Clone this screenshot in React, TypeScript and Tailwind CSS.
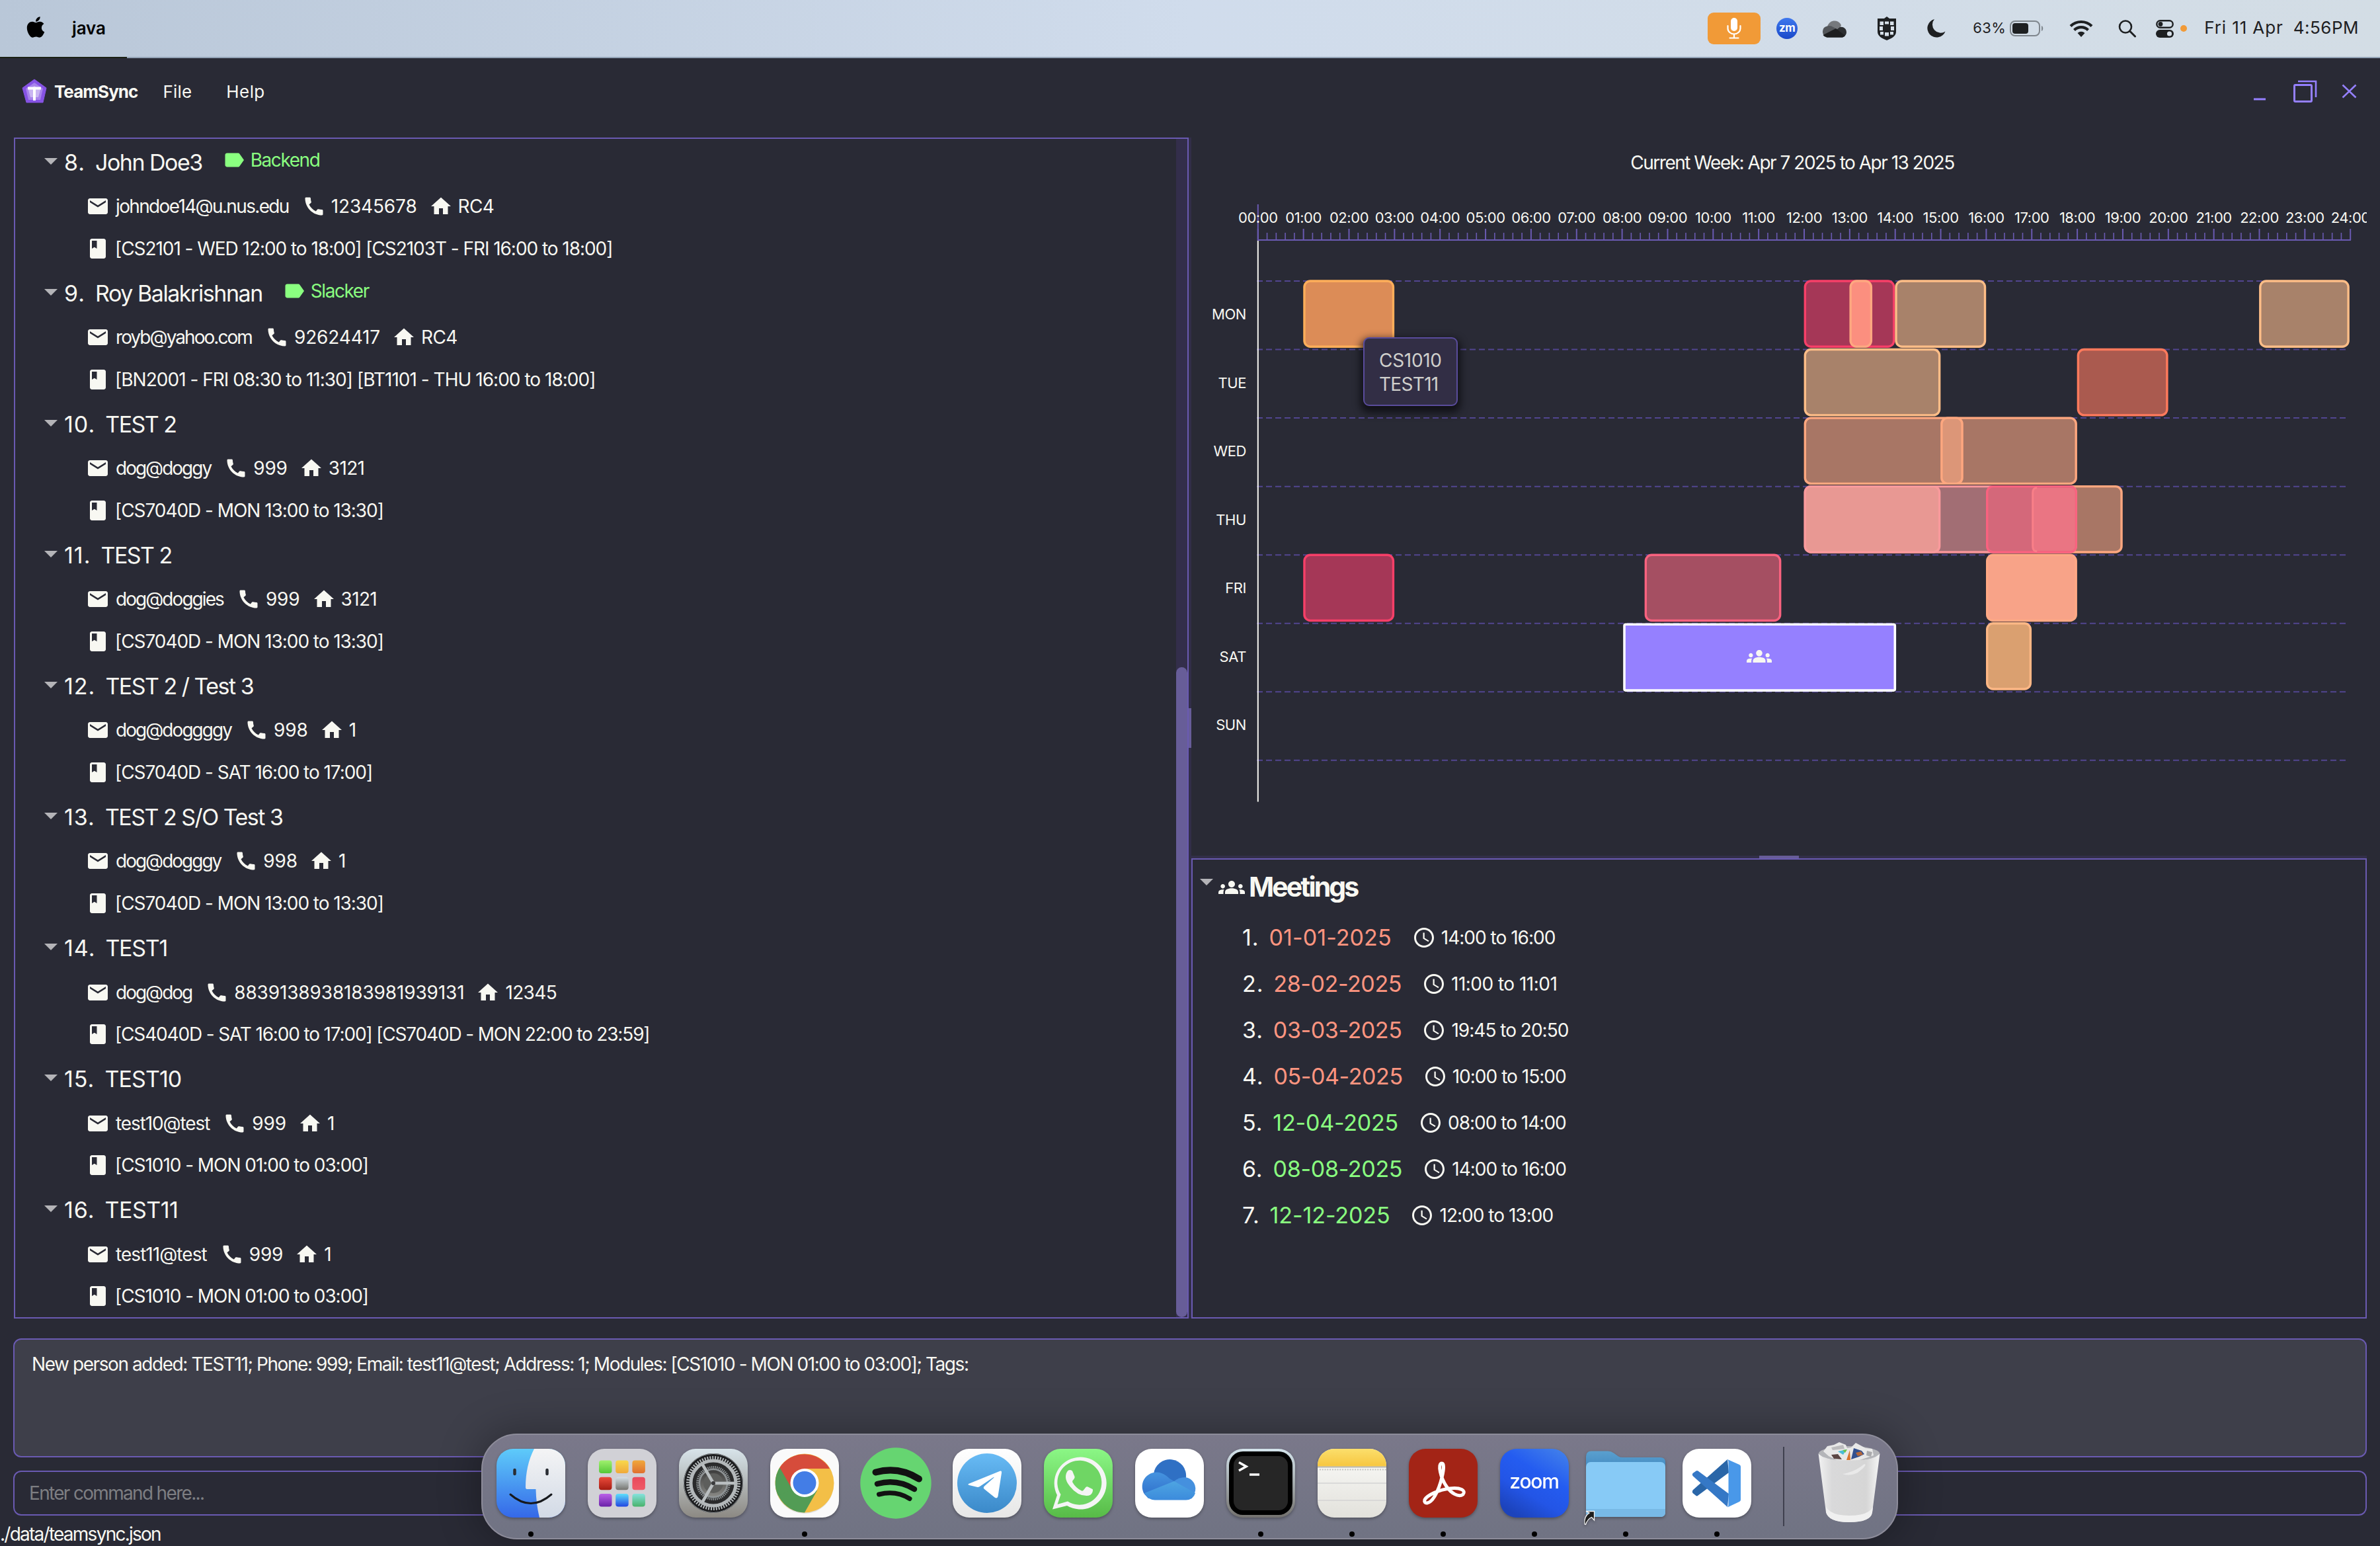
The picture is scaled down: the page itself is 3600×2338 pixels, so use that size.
import React from "react";
import { MdBook, MdCall, MdEmail, MdGroups, MdHome, MdLabel, MdAccessTime } from "react-icons/md";
import { FaApple } from "react-icons/fa";

type Person = {
  index: number;
  name: string;
  nameClass?: string;
  tag?: string;
  email: string;
  emailClass: string;
  phone: string;
  address: string;
  modules: string;
  modulesClass?: string;
};

const people: Person[] = [
  { index: 8, name: "John Doe3", tag: "Backend", email: "johndoe14@u.nus.edu", emailClass: "tracking-[-1.650px]", phone: "12345678", address: "RC4", modules: "[CS2101 - WED 12:00 to 18:00] [CS2103T - FRI 16:00 to 18:00]" },
  { index: 9, name: "Roy Balakrishnan", nameClass: "tracking-[-1.450px]", tag: "Slacker", email: "royb@yahoo.com", emailClass: "tracking-[-1.950px]", phone: "92624417", address: "RC4", modules: "[BN2001 - FRI 08:30 to 11:30] [BT1101 - THU 16:00 to 18:00]", modulesClass: "tracking-[-0.980px]" },
  { index: 10, name: "TEST 2", email: "dog@doggy", emailClass: "tracking-[-2px]", phone: "999", address: "3121", modules: "[CS7040D - MON 13:00 to 13:30]" },
  { index: 11, name: "TEST 2", email: "dog@doggies", emailClass: "tracking-[-1.950px]", phone: "999", address: "3121", modules: "[CS7040D - MON 13:00 to 13:30]" },
  { index: 12, name: "TEST 2 / Test 3", email: "dog@doggggy", emailClass: "tracking-[-1.950px]", phone: "998", address: "1", modules: "[CS7040D - SAT 16:00 to 17:00]" },
  { index: 13, name: "TEST 2 S/O Test 3", email: "dog@dogggy", emailClass: "tracking-[-2px]", phone: "998", address: "1", modules: "[CS7040D - MON 13:00 to 13:30]" },
  { index: 14, name: "TEST1", nameClass: "tracking-[-1.300px]", email: "dog@dog", emailClass: "tracking-[-2px]", phone: "8839138938183981939131", address: "12345", modules: "[CS4040D - SAT 16:00 to 17:00] [CS7040D - MON 22:00 to 23:59]", modulesClass: "tracking-[-1.160px]" },
  { index: 15, name: "TEST10", nameClass: "tracking-[-0.900px]", email: "test10@test", emailClass: "tracking-[-1.100px]", phone: "999", address: "1", modules: "[CS1010 - MON 01:00 to 03:00]" },
  { index: 16, name: "TEST11", nameClass: "tracking-[-0.500px]", email: "test11@test", emailClass: "tracking-[-0.950px]", phone: "999", address: "1", modules: "[CS1010 - MON 01:00 to 03:00]" },
];

const meetings = [
  { date: "01-01-2025", time: "14:00 to 16:00", past: true, dateClass: "tracking-[0.100px]", timeClass: "tracking-[-0.980px]" },
  { date: "28-02-2025", time: "11:00 to 11:01", past: true, dateClass: "tracking-[-0.400px]", timeClass: "tracking-[-0.520px]" },
  { date: "03-03-2025", time: "19:45 to 20:50", past: true, dateClass: "tracking-[-0.400px]", timeClass: "tracking-[-1px]" },
  { date: "05-04-2025", time: "10:00 to 15:00", past: true, dateClass: "tracking-[-0.400px]", timeClass: "tracking-[-0.980px]" },
  { date: "12-04-2025", time: "08:00 to 14:00", past: false, dateClass: "tracking-[-0.200px]", timeClass: "tracking-[-1px]" },
  { date: "08-08-2025", time: "14:00 to 16:00", past: false, dateClass: "tracking-[-0.300px]", timeClass: "tracking-[-0.980px]" },
  { date: "12-12-2025", time: "12:00 to 13:00", past: false, dateClass: "tracking-[-0.100px]", timeClass: "tracking-[-0.980px]" },
];

/* ---------- macOS menu bar ---------- */

function MenuBar() {
  return (
    <header className="flex h-[86px] w-full shrink-0 items-center bg-linear-to-r from-[#b9c7d8] via-[#d0dcec] via-50% to-[#d3dde5] text-black">
      <FaApple className="ml-[40px] h-[36px] w-[28px] -translate-y-[2px]" />
      <span className="ml-[41px] text-[26px] font-semibold tracking-[-0.1px]">java</span>
      <div className="ml-auto flex items-center text-[#1e2022]">
        <div className="flex h-[48px] w-[80px] items-center justify-center rounded-[9px] bg-[#f19a37]">
          <svg width="22" height="32" viewBox="0 0 22 32">
            <rect x="6" y="0" width="10" height="20" rx="5" fill="#fff" />
            <path d="M1.5 12v4a9.5 8.5 0 0 0 19 0v-4M11 25v5M4.5 30.5h13" fill="none" stroke="#fff" strokeWidth="2.2" strokeLinecap="round" />
          </svg>
        </div>
        <div className="ml-[24px] flex size-[32px] items-center justify-center rounded-full bg-linear-to-b from-[#3f78ee] to-[#1b48c9] pb-[2px] text-[17px] font-bold tracking-[-0.6px] text-white">zm</div>
        <svg className="ml-[36px]" width="40" height="28" viewBox="0 0 40 28">
          <path d="M9 12a11 11 0 0 1 21-3l-4 10z" fill="#76797d" />
          <path d="M8 27A8.5 8.5 0 0 1 9 10.500a11 11 0 0 1 9 1.500l9 5L8 27z" fill="#53565a" />
          <path d="M8 27.500L28 12a8 8 0 0 1 4 15.500z" fill="#2c2e31" />
          <path d="M2.500 24L22 14l14 11a7 7 0 0 1-4 2.500H8A8 8 0 0 1 2.500 24z" fill="#1d1e20" />
        </svg>
        <svg className="ml-[44px]" width="30" height="36" viewBox="0 0 30 36">
          <path d="M15 0l4 3h10v20c0 6-6 10-14 13C7 33 1 29 1 23V3h10z" fill="#1e2022" />
          <g fill="#d6dfe8">
            <rect x="4.500" y="7.500" width="5.500" height="5.500" /><rect x="12" y="7.500" width="6" height="4" /><rect x="20" y="7.500" width="5.500" height="5.500" />
            <rect x="4" y="15" width="5" height="6" /><rect x="21" y="15" width="5" height="6" />
            <rect x="5" y="23" width="5" height="4.500" /><rect x="12" y="24" width="6" height="5.500" /><rect x="20" y="23" width="5" height="4.500" />
          </g>
        </svg>
        <svg className="ml-[45px]" width="30" height="28" viewBox="0 0 30 28">
          <path d="M12 0A14 14 0 1 0 28.500 18.500 12.500 12.500 0 0 1 12 0z" fill="#1e2022" />
        </svg>
        <span className="ml-[40px] -translate-y-px text-[22px] tracking-[0.400px]">63%</span>
        <svg className="ml-[6px]" width="52" height="24" viewBox="0 0 52 24">
          <rect x="1" y="1" width="44" height="22" rx="7" fill="none" stroke="#7f868d" strokeWidth="2" />
          <rect x="4" y="4" width="24" height="16" rx="4" fill="#1e2022" />
          <path d="M48 8c3 1 3 7 0 8z" fill="#7f868d" />
        </svg>
        <svg className="ml-[38px]" width="36" height="26" viewBox="0 0 36 26">
          <path d="M2 9.500a23 23 0 0 1 32 0M7.500 15.500a15 15 0 0 1 21 0" fill="none" stroke="#1e2022" strokeWidth="4.200" />
          <path d="M18 26l-5.500-6a8 8 0 0 1 11 0z" fill="#1e2022" />
        </svg>
        <svg className="ml-[38px]" width="28" height="27" viewBox="0 0 28 27">
          <circle cx="11" cy="10.500" r="9" fill="none" stroke="#1e2022" strokeWidth="2.600" />
          <path d="M17.500 17l8 8" stroke="#1e2022" strokeWidth="3" strokeLinecap="round" />
        </svg>
        <svg className="ml-[29px]" width="27" height="27" viewBox="0 0 27 27">
          <rect x="1.300" y="1.300" width="24.400" height="10.400" rx="5.200" fill="none" stroke="#1e2022" strokeWidth="2.400" />
          <circle cx="7" cy="6.500" r="3.400" fill="#1e2022" />
          <rect x="0" y="15" width="27" height="12" rx="6" fill="#1e2022" />
          <circle cx="20.500" cy="21" r="3.600" fill="#d6dfe8" />
        </svg>
        <span className="ml-[10px] size-[10px] rounded-full bg-[#f19a37]" />
        <span className="ml-[26px] -translate-y-px text-[26px] tracking-[0.900px]">Fri 11 Apr</span>
        <span className="mr-[32px] ml-[15px] -translate-y-px text-[26px] tracking-[0.500px]">4:56PM</span>
      </div>
    </header>
  );
}

/* ---------- application title bar ---------- */

function TitleBar() {
  return (
    <div className="flex h-[120px] shrink-0 items-center pb-[20px] text-[26px]">
      <svg className="ml-[33px]" width="38" height="38" viewBox="0 0 38 38">
        <path d="M19 1L37 14 32 36H7L1 14z" fill="#8653e4" stroke="#8653e4" strokeWidth="1" strokeLinejoin="round" />
        <path d="M19 6L32 15 28 32H10L6 15z" fill="#a884ec" />
        <path d="M19 11L28 17 25 28H13L10 17z" fill="#c9b5f2" />
        <path d="M9 12.500h20v4h-8V33h-4V16.500H9z" fill="#fff" />
      </svg>
      <span className="ml-[11px] translate-y-px font-bold tracking-[-0.950px]">TeamSync</span>
      <span className="ml-[38px] translate-y-px tracking-[0.200px]">File</span>
      <span className="ml-[52px] translate-y-px tracking-[0.400px]">Help</span>
      <svg className="mr-[35px] ml-auto -translate-y-px" width="156" height="36" viewBox="0 0 156 36" fill="none" stroke="#9580ff">
        <path d="M0 31h18" strokeWidth="3" />
        <path d="M67 4h27v24" strokeWidth="2.600" />
        <rect x="61.500" y="9.500" width="26" height="25" rx="1.500" strokeWidth="3" />
        <path d="M134.500 9.500l20 19M154.500 9.500l-20 19" strokeWidth="2.600" />
      </svg>
    </div>
  );
}

/* ---------- person list ---------- */

function Arrow({ className }: { className?: string }) {
  return (
    <svg className={className} width="20" height="10" viewBox="0 0 20 10">
      <path d="M0 0h20L10 10z" fill="#b4b4b8" />
    </svg>
  );
}

function PersonCard({ p }: { p: Person }) {
  return (
    <li className="flex h-[198.100px] flex-col">
      <div className="flex h-[71px] items-center pl-[44px]">
        <Arrow className="-translate-y-[2px]" />
        <span className="ml-[10px] text-[34px] tracking-[1px]">{p.index}.</span>
        <span className={`ml-[15px] text-[34px] whitespace-pre ${p.nameClass ?? "tracking-[-1.520px]"}`}>{p.name}</span>
        {p.tag && (
          <span className="ml-[30px] flex -translate-y-[4px] items-center text-[#8aff80]">
            <MdLabel className="size-[36px]" />
            <span className="ml-[7px] text-[28px] tracking-[-1.45px]">{p.tag}</span>
          </span>
        )}
      </div>
      <div className="flex h-[62px] items-center pl-[107px] text-[28px]">
        <MdEmail className="size-[36px]" />
        <span className={`ml-[9px] ${p.emailClass}`}>{p.email}</span>
        <MdCall className="ml-[20px] size-[36px]" />
        <span className="ml-[8px] tracking-[-0.150px]">{p.phone}</span>
        <MdHome className="ml-[18px] size-[36px]" />
        <span className="ml-[8px] tracking-[-0.650px]">{p.address}</span>
      </div>
      <div className="flex h-[65px] items-center pl-[107px] text-[28px]">
        <MdBook className="size-[36px]" />
        <span className={`ml-[8px] ${p.modulesClass ?? "tracking-[-1.050px]"}`}>{p.modules}</span>
      </div>
    </li>
  );
}

function PersonList() {
  return (
    <section className="relative flex h-[1786px] w-[1777px] shrink-0 border-2 border-[#6a5ab2]">
      <ul className="flex-1">
        {people.map((p) => (
          <PersonCard key={p.index} p={p} />
        ))}
      </ul>
      <div className="flex w-[17px] flex-col justify-end bg-[#332e4b]">
        <div className="h-[983px] w-[17px] rounded-[9px] bg-[#675d98]" />
      </div>
    </section>
  );
}

/* ---------- weekly timetable ---------- */

const HOUR = 68.85;
const X0 = 1902.8;
const DAY = 103.55;

type Slot = { day: number; from: number; to: number; fill: string; stroke: string };

const slots: Slot[] = [
  { day: 0, from: 1, to: 3, fill: "#dc8c57", stroke: "#feae5a" },
  { day: 0, from: 12, to: 14, fill: "#a53757", stroke: "#f73f68" },
  { day: 0, from: 13, to: 13.5, fill: "#fb8f7f", stroke: "#fea880" },
  { day: 0, from: 14, to: 16, fill: "#a8826a", stroke: "#febd87" },
  { day: 0, from: 22, to: 23.983, fill: "#a8826a", stroke: "#febd87" },
  { day: 1, from: 12, to: 15, fill: "#a8826a", stroke: "#febd87" },
  { day: 1, from: 18, to: 20, fill: "#aa5a4f", stroke: "#ff7a5c" },
  { day: 2, from: 12, to: 18, fill: "#a87665", stroke: "#fea77f" },
  { day: 2, from: 15, to: 15.5, fill: "#dc9678", stroke: "#fea77f" },
  { day: 3, from: 17, to: 19, fill: "#a87665", stroke: "#fea77f" },
  { day: 3, from: 12, to: 18, fill: "#a26e74", stroke: "#f9969a" },
  { day: 3, from: 12, to: 15, fill: "#e89893", stroke: "#f99a9c" },
  { day: 3, from: 16, to: 18, fill: "#d4687a", stroke: "#f9627f" },
  { day: 4, from: 1, to: 3, fill: "#a53757", stroke: "#f73f68" },
  { day: 4, from: 8.5, to: 11.5, fill: "#a54f62", stroke: "#f9627f" },
  { day: 4, from: 16, to: 18, fill: "#f8a388", stroke: "#ffa985" },
  { day: 5, from: 16, to: 17, fill: "#daa070", stroke: "#fdb785" },
];

const days = ["MON", "TUE", "WED", "THU", "FRI", "SAT", "SUN"];

function Timetable() {
  const ticks = Array.from({ length: 121 }, (_, i) => i);
  const hours = Array.from({ length: 25 }, (_, i) => i);
  return (
    <svg width="1778" height="1086" viewBox="1802 208 1778 1086" className="block" fontFamily="Inter, sans-serif" fill="#f8f8f2">
      <text x="2711" y="256" fontSize="28" letterSpacing="-1.480" textAnchor="middle">Current Week: Apr 7 2025 to Apr 13 2025</text>
      {days.concat("").map((d, i) => (
        <path key={i} d={`M1901 ${425 + i * DAY}H3549`} stroke="#51458f" strokeWidth="2" strokeDasharray="9 5" />
      ))}
      {ticks.map((i) => (
        <path key={i} d={`M${X0 + (i * HOUR) / 5} ${i % 5 ? 352 : 346}V363`} stroke="#6a5ab2" strokeWidth={i % 5 ? 1.6 : 2} />
      ))}
      <path d={`M${X0} 363H3556`} stroke="#6a5ab2" strokeWidth="2" />
      <path d={`M${X0} 309V364`} stroke="#6a5ab2" strokeWidth="2" />
      <path d={`M${X0} 364V1212.500`} stroke="#f8f8f2" strokeWidth="2" />
      {hours.map((h) => (
        <text key={h} x={X0 + h * HOUR} y="337.300" fontSize="22" letterSpacing="-0.450" textAnchor="middle">
          {String(h).padStart(2, "0")}:00
        </text>
      ))}
      {days.map((d, i) => (
        <text key={d} x="1885" y={483 + i * DAY} fontSize="22" letterSpacing="-0.400" textAnchor="end">{d}</text>
      ))}
      {slots.map((s, i) => (
        <rect key={i} x={X0 + s.from * HOUR - 0.300 + 1.600} y={425 + s.day * DAY} width={(s.to - s.from) * HOUR - 3.200} height="99.300" rx="9" fill={s.fill} stroke={s.stroke} strokeWidth="3.400" />
      ))}
      <rect x={X0 + 17 * HOUR + 1.300} y={427 + 3 * DAY} width={HOUR - 4.600} height="95.300" rx="7" fill="#ea7583" />
      <path d={`M${X0 + 17 * HOUR + 8} ${427 + 3 * DAY}q-6.500 0-6.500 7v82q0 7 6.500 7`} fill="none" stroke="#f97f88" strokeWidth="3" />
      <rect x="2457" y="944.300" width="409.300" height="99.800" rx="2" fill="#9580ff" stroke="#fff" strokeWidth="3.600" />
      <MdGroups x={2642} y={973.5} size={38} />
    </svg>
  );
}

function Tooltip() {
  return (
    <div className="absolute top-[510px] left-[2062px] h-[104px] w-[143px] rounded-[9px] border-2 border-[#5a4c9c] bg-[#322e45] pt-[15px] pl-[22px] text-[28px] leading-[36px] text-[#cfcfcc] shadow-[0_6px_12px_4px_rgba(10,10,14,0.75)]">
      <div className="tracking-[-0.3px]">CS1010</div>
      <div className="tracking-[-0.7px]">TEST11</div>
    </div>
  );
}

/* ---------- meetings ---------- */

function Meetings() {
  return (
    <section className="flex h-[696px] flex-col border-2 border-[#6a5ab2]">
      <div className="flex h-[83px] items-center pl-[11px]">
        <Arrow className="-translate-y-[8px]" />
        <MdGroups className="ml-[8px] size-[40px]" />
        <span className="ml-[6px] text-[41px] font-bold tracking-[-2.900px]">Meetings</span>
      </div>
      <ol className="flex flex-col">
        {meetings.map((m, i) => (
          <li key={m.date} className="flex h-[70px] items-center pl-[75px]">
            <span className="text-[34px] tracking-[0.900px]">{i + 1}.</span>
            <span className={`ml-[15px] text-[34px] ${m.dateClass} ${m.past ? "text-[#ff9580]" : "text-[#8aff80]"}`}>{m.date}</span>
            <MdAccessTime className="ml-[31px] size-[36px]" />
            <span className={`ml-[8px] text-[28px] ${m.timeClass}`}>{m.time}</span>
          </li>
        ))}
      </ol>
    </section>
  );
}

/* ---------- dock ---------- */

function Tile({ fill, children }: { fill: string; children?: React.ReactNode }) {
  return (
    <svg width="104" height="104" viewBox="0 0 104 104" className="block overflow-visible drop-shadow-[0_2px_2px_rgba(0,0,0,0.3)]">
      <rect width="104" height="104" rx="25" fill={fill} />
      {children}
    </svg>
  );
}

function Grad({ id, from, to, x2 = 0, y2 = 1 }: { id: string; from: string; to: string; x2?: number; y2?: number }) {
  return (
    <linearGradient id={id} x1="0" y1="0" x2={x2} y2={y2}>
      <stop offset="0" stopColor={from} />
      <stop offset="1" stopColor={to} />
    </linearGradient>
  );
}

function Finder() {
  return (
    <Tile fill="url(#finderL)">
      <defs>
        <Grad id="finderL" from="#5ecbfa" to="#3568e8" />
        <Grad id="finderR" from="#f4f4f5" to="#d2dae6" />
      </defs>
      <path d="M57 0H79a25 25 0 0 1 25 25V79a25 25 0 0 1-25 25H65Q60 84 59.500 61H46Q44 61 44 58 44 25 57 0z" fill="url(#finderR)" />
      <path d="M27.500 32v6M76.500 32v6" stroke="#2a2d33" strokeWidth="4.500" strokeLinecap="round" />
      <path d="M21 69Q52 96 83 69" fill="none" stroke="#17191d" strokeWidth="3" strokeLinecap="round" />
    </Tile>
  );
}

const padColors = [
  ["#a0f06e", "#55c838"], ["#f8d84c", "#f0a93a"], ["#f0a83c", "#e0702f"],
  ["#ec4b3b", "#a51c12"], ["#d6e0e6", "#74746f"], ["#e94a5c", "#ef5b68"],
  ["#bb62e8", "#6a21a8"], ["#5fe0fb", "#2347e2"], ["#86e2de", "#49b36c"],
];

function Launchpad() {
  return (
    <Tile fill="#d1d1d6">
      <defs>
        {padColors.map((c, i) => (
          <Grad key={i} id={`pad${i}`} from={c[0]} to={c[1]} />
        ))}
      </defs>
      {padColors.map((_, i) => (
        <rect key={i} x={17 + (i % 3) * 25.200} y={17.500 + Math.floor(i / 3) * 25.200} width="19.500" height="19.500" rx="4" fill={`url(#pad${i})`} />
      ))}
    </Tile>
  );
}

function Settings() {
  return (
    <Tile fill="url(#setBg)">
      <defs>
        <Grad id="setBg" from="#d8e4ea" to="#8c8983" />
        <Grad id="setIn" from="#3a3a3a" to="#8a8a86" />
      </defs>
      <circle cx="52" cy="52" r="45" fill="#1b1c1e" />
      <circle cx="52" cy="52" r="44.500" fill="none" stroke="#8d9295" strokeWidth="1" />
      <circle cx="52" cy="52" r="38.500" fill="none" stroke="#b3b8ba" strokeWidth="5" strokeDasharray="2 1.900" />
      <circle cx="52" cy="52" r="34" fill="#2a2b2c" stroke="#b3b8ba" strokeWidth="5" />
      <circle cx="52" cy="52" r="24" fill="none" stroke="#8f9496" strokeWidth="4" strokeDasharray="1.500 1.300" />
      <circle cx="52" cy="52" r="21" fill="url(#setIn)" stroke="#8f9496" strokeWidth="2.500" />
      <circle cx="52" cy="52" r="15" fill="#5d5e5c" />
      <path d="M52 52H85M52 52L35.500 23.500M52 52L35.500 80.500" stroke="#b9bec0" strokeWidth="4.500" />
      <circle cx="52" cy="52" r="3" fill="#3a3b3c" />
    </Tile>
  );
}

function Chrome() {
  return (
    <Tile fill="#fafafa">
      <circle cx="52" cy="54" r="44" fill="#000" opacity="0.100" />
      <circle cx="52" cy="52" r="44.500" fill="#f3bf47" />
      <path d="M52 52L14.500 29A44.500 44.500 0 0 0 52 96.500L71 63z" fill="#529c55" />
      <path d="M52 52L33.500 62 14.300 28.500A44.500 44.500 0 0 1 90 30H52z" fill="#d64c3b" />
      <path d="M33.500 62L14.300 28.500A44.500 44.500 0 0 0 12 71z" fill="#529c55" />
      <circle cx="52" cy="51.500" r="21.500" fill="#fff" />
      <circle cx="52" cy="51.500" r="17.500" fill="#437de6" />
    </Tile>
  );
}

function Spotify() {
  return (
    <svg width="104" height="104" viewBox="0 0 104 104" className="block overflow-visible">
      <circle cx="52" cy="52" r="53.700" fill="#66d571" />
      <g fill="none" stroke="#121212" strokeLinecap="round">
        <path d="M21.500 35.500Q56 26 87 45.500" strokeWidth="10" />
        <path d="M24 53Q54 45 80 61" strokeWidth="8.500" />
        <path d="M26.500 69Q52 62.500 73 75.500" strokeWidth="7" />
      </g>
    </svg>
  );
}

function Telegram() {
  return (
    <Tile fill="url(#tgBg)">
      <defs>
        <Grad id="tgBg" from="#ffffff" to="#e6e6e6" />
        <Grad id="tgC" from="#68bbf5" to="#3b89c9" />
      </defs>
      <circle cx="52" cy="52" r="45" fill="url(#tgC)" />
      <path d="M24 53L72 33.500Q74.500 33 74 36.500L68.500 72Q67.500 76 63.500 73.500L48 61Q45.500 59 48 56.500L62 44Q64 42 61 43.500L41 57Q38.500 58.500 35.500 57.500L25 55Q22.500 54 24 53z" fill="#fff" />
    </Tile>
  );
}

function WhatsApp() {
  return (
    <Tile fill="url(#waBg)">
      <defs>
        <Grad id="waBg" from="#8bf786" to="#57bb47" />
      </defs>
      <path d="M13 91.500L20 70A39.500 39.500 0 1 1 35 86z" fill="#f5f5f5" />
      <path d="M20.500 84L25.500 69A33.500 33.500 0 1 1 36 79.500z" fill="#6fd664" />
      <path d="M37 32.500q4-1.500 6 1l3.500 8.500q.800 2-3 6-.800 1.500 0 3 5 8.500 13.500 12.500 1.500.500 2.500-.500l4-5q1-1.200 3-.500l7 3.500q1 .800 0 4.500-2 5.500-9 5.500-14 0-25-14-6.500-8-6.500-14 0-7 4-10.500z" fill="#f5f5f5" />
    </Tile>
  );
}

function OneDrive() {
  return (
    <Tile fill="#ffffff">
      <defs>
        <Grad id="odL" from="#4593df" to="#2f6fcb" />
        <Grad id="odB" from="#4ea5e2" to="#3c8bdc" />
      </defs>
      <path d="M28 38A24.500 24.500 0 0 1 77 43.500L60 60z" fill="#2f70c4" />
      <path d="M14 68.500A21.500 21.500 0 0 1 40 37Q46 39 52 45L62 51 20 75z" fill="url(#odL)" />
      <path d="M59 49Q66 43 76 43A17.500 17.500 0 0 1 90 67L85 74z" fill="#4590de" />
      <path d="M14 67L59 49 91 67Q88 77 77 77.500H30Q19 77 14 67z" fill="url(#odB)" />
    </Tile>
  );
}

function Terminal() {
  return (
    <Tile fill="url(#teBg)">
      <defs>
        <Grad id="teBg" from="#d4e4ec" to="#73716e" />
      </defs>
      <rect x="4" y="4" width="96" height="96" rx="21" fill="#000" />
      <rect x="11" y="11" width="82" height="82" rx="14" fill="#262626" />
      <path d="M19 20.500l11 6.200-11 6.200" fill="none" stroke="#fff" strokeWidth="3.500" />
      <path d="M35 39h15" stroke="#fff" strokeWidth="3.500" />
    </Tile>
  );
}

function Notes() {
  return (
    <Tile fill="url(#noBg)">
      <defs>
        <Grad id="noBg" from="#fbfbf9" to="#e2e1db" />
        <Grad id="noY" from="#fbdf6c" to="#f7c63f" />
      </defs>
      <path d="M0 26.500V25A25 25 0 0 1 25 0H79a25 25 0 0 1 25 25V26.500z" fill="url(#noY)" />
      <path d="M0 27.500H104" stroke="#a9a69c" strokeWidth="1.500" />
      <path d="M3 31.500H104" stroke="#bdbdb9" strokeWidth="2" strokeDasharray="1.800 2" />
      <path d="M0 52H104M0 78H104" stroke="#d3d3d3" strokeWidth="1.500" />
    </Tile>
  );
}

function Acrobat() {
  return (
    <Tile fill="#a32416">
      <path d="M50 22C43 22 48 44 57 57 64 67 75 74 82 69 87 63 78 58 62 60 45 62 28 70 24 77 22 84 31 85 39 72 48 57 57 22 50 22z" fill="none" stroke="#fff" strokeWidth="5" strokeLinejoin="round" />
    </Tile>
  );
}

function Zoom() {
  return (
    <Tile fill="url(#zoBg)">
      <defs>
        <linearGradient id="zoBg" x1="0.900" y1="0" x2="0.300" y2="1">
          <stop offset="0" stopColor="#4280ea" />
          <stop offset="0.400" stopColor="#245cf0" />
          <stop offset="0.700" stopColor="#2355e6" />
          <stop offset="1" stopColor="#1c43bb" />
        </linearGradient>
      </defs>
      <text x="51.500" y="60" textAnchor="middle" fontFamily="Inter, sans-serif" fontWeight="500" fontSize="30" letterSpacing="-1.200" fill="#fff">zoom</text>
    </Tile>
  );
}

function Folder() {
  return (
    <svg width="104" height="104" viewBox="0 0 104 104" className="block overflow-visible drop-shadow-[0_2px_2px_rgba(0,0,0,0.3)]">
      <defs>
        <Grad id="foB" from="#5aa0cf" to="#3b82bd" />
      </defs>
      <path d="M-8 12Q-8 3.500 0 3.500H25Q30 3.500 34 6.500L41 11.500Q43.500 13 48 13H104Q112 13 112 20V40H-8z" fill="url(#foB)" />
      <rect x="-8" y="20" width="120" height="83" rx="7" fill="#87caf6" />
      <path d="M-8 91H112V96Q112 103 105 103H-1Q-8 103-8 96z" fill="#78b9e6" />
      <path d="M-10 114C-11 105-8 100-3 97L-8 94.500H4.500V108L0.500 103.500C-5 106-7 110-8.500 114.500z" fill="#1d1d1d" stroke="#f4f4f4" strokeWidth="1.300" />
    </svg>
  );
}

function VsCode() {
  return (
    <Tile fill="#ffffff">
      <path d="M68 16L15.500 62.500Q14 65 15.500 67L20.500 71Q22 72 23.500 70.500L70 36z" fill="#2a66a8" />
      <path d="M68 88L15.500 41Q14 39 15.500 37L20.500 33.500Q22 32.500 23.500 33.500L70 68z" fill="#3578c6" />
      <path d="M68 16L86 24Q88 25 88 27V77Q88 79 86 80L68 88.500Q69.500 87 69.500 84V20Q69.500 17.500 68 16z" fill="#4998e9" />
    </Tile>
  );
}

function Trash() {
  return (
    <svg width="94" height="122" viewBox="0 0 94 122" className="block overflow-visible">
      <defs>
        <linearGradient id="trG" x1="0" x2="1" y1="0" y2="0">
          <stop offset="0" stopColor="#f2f2f2" />
          <stop offset="0.220" stopColor="#d9d9da" />
          <stop offset="0.780" stopColor="#d6d6d6" />
          <stop offset="1" stopColor="#f6f6f6" />
        </linearGradient>
      </defs>
      <ellipse cx="47" cy="17" rx="46" ry="11" fill="#b4b5b9" />
      <path d="M8 14L14 6 24 4 32 0 42 4 44 9 50 8 57 1 72 9 82 10 84 20 72 24 60 28 30 28 16 21z" fill="#e8e8e8" />
      <path d="M20 8l18-4 2 6-18 2z" fill="#bcbcbe" />
      <path d="M30 14l13-3-5 8z" fill="#49bcd8" />
      <path d="M37 12l7-1-3 5z" fill="#6cc24a" />
      <path d="M20 19l10-1 6 8-12-1z" fill="#5b4644" />
      <path d="M48 12l-5 15h6z" fill="#d9742f" />
      <path d="M54 9l12 4 4 5-8 4-12 4z" fill="#33508f" />
      <path d="M57 16l8-2 3 5-8 2z" fill="#b5683b" />
      <path d="M74 13l8 2-2 7-7-2z" fill="#aaaaac" />
      <path d="M0.500 17Q8 27.500 47 27.500 86 27.500 93.500 17L82 106Q80 121 47 121 16 121 12 106z" fill="url(#trG)" />
      <path d="M12 98Q20 111 47 111 76 111 83 98L82 106Q80 121 47 121 16 121 12 106z" fill="#f0f0f0" />
      <path d="M37 48Q56 45 70 33 76 34 60 46 48 52 37 48z" fill="#e9e9e9" />
    </svg>
  );
}

const dockApps: { name: string; icon: React.ReactNode; running: boolean }[] = [
  { name: "finder", icon: <Finder />, running: true },
  { name: "launchpad", icon: <Launchpad />, running: false },
  { name: "settings", icon: <Settings />, running: false },
  { name: "chrome", icon: <Chrome />, running: true },
  { name: "spotify", icon: <Spotify />, running: false },
  { name: "telegram", icon: <Telegram />, running: false },
  { name: "whatsapp", icon: <WhatsApp />, running: false },
  { name: "onedrive", icon: <OneDrive />, running: false },
  { name: "terminal", icon: <Terminal />, running: true },
  { name: "notes", icon: <Notes />, running: true },
  { name: "acrobat", icon: <Acrobat />, running: true },
  { name: "zoom", icon: <Zoom />, running: true },
  { name: "folder", icon: <Folder />, running: true },
  { name: "vscode", icon: <VsCode />, running: true },
];

function Dock() {
  return (
    <div className="absolute top-[2168px] left-[728px] flex h-[160px] w-[2143px] rounded-[54px] border-2 border-[#8d8c9a] bg-linear-to-b from-[#7a788a] to-[#707383] pl-[21px] shadow-[0_0_60px_6px_rgba(0,0,0,0.28)]">
      <div className="flex gap-[34px] pt-[21px]">
        {dockApps.map((a) => (
          <div key={a.name} className="flex w-[104px] flex-col items-center">
            {a.icon}
            {a.running && <span className="mt-[21px] size-[8px] rounded-full bg-black" />}
          </div>
        ))}
      </div>
      <div className="mt-[18px] ml-[48px] h-[120px] w-[2px] bg-[#3f404e]" />
      <div className="mt-[11px] ml-[51px]">
        <Trash />
      </div>
    </div>
  );
}

/* ---------- page ---------- */

export default function App() {
  return (
    <div className="relative flex h-[2338px] w-[3600px] flex-col overflow-hidden bg-[#292a35] font-['Inter',sans-serif] leading-none text-[#f8f8f2]">
      <MenuBar />
      <div className="flex h-[2px] shrink-0 bg-[#93a3b6]">
        <div className="w-[192px] bg-[#1b2114]" />
      </div>
      <TitleBar />
      <main className="flex h-[1786px] shrink-0 pl-[21px]">
        <PersonList />
        <div className="flex w-[4px] flex-col bg-[#322e48] pt-[863px]">
          <div className="h-[60px] w-[4px] bg-[#675d98]" />
        </div>
        <div className="flex w-[1778px] flex-col">
          <Timetable />
          <div className="flex h-[4px] justify-center bg-[#322f48]">
            <div className="w-[60px] bg-[#675d98]" />
          </div>
          <Meetings />
        </div>
      </main>
      <div className="mx-[20px] mt-[30px] h-[180px] shrink-0 rounded-[12px] border-2 border-[#6a5ab2] bg-[#3e3f4a] pt-[21px] pl-[26px] text-[28px] leading-[32px] tracking-[-1.430px]">
        New person added: TEST11; Phone: 999; Email: test11@test; Address: 1; Modules: [CS1010 - MON 01:00 to 03:00]; Tags:
      </div>
      <div className="mx-[20px] mt-[20px] flex h-[68px] shrink-0 items-center rounded-[12px] border-2 border-[#6a5ab2] pl-[22px] text-[28px] tracking-[-1.680px] text-[#7d7e82]">
        Enter command here...
      </div>
      <div className="flex h-[46px] items-center pt-[10px] text-[28px] tracking-[-1.750px]">./data/teamsync.json</div>
      <Tooltip />
      <Dock />
    </div>
  );
}
